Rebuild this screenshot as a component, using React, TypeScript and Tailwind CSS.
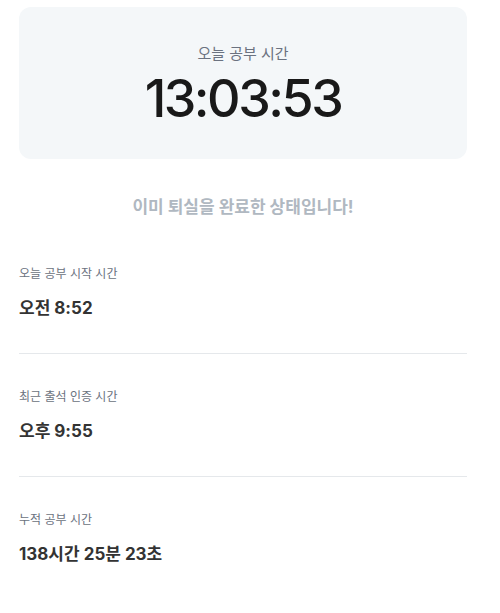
type Row = { label: string; value: string };

const rows: Row[] = [
  { label: "오늘 공부 시작 시간", value: "오전 8:52" },
  { label: "최근 출석 인증 시간", value: "오후 9:55" },
  { label: "누적 공부 시간", value: "138시간 25분 23초" },
];

export default function App() {
  return (
    <div className="min-h-screen bg-white font-['Inter','Noto_Sans_CJK_KR',sans-serif]">
      <div className="ml-[19px] w-[448px] pt-[7px]">
        <div className="flex h-[152px] flex-col items-center rounded-xl bg-[#f4f7f9] pt-[36px]">
          <p className="text-[15px] leading-[22px] text-[#6b7280]">오늘 공부 시간</p>
          <p className="mt-[6px] text-[52px] leading-[56px] font-medium tracking-[-2.5px] text-[#191919]">
            13:03:53
          </p>
        </div>

        <p className="mt-[36px] text-center text-[17px] leading-[24px] font-bold text-[#b0b8c1]">
          이미 퇴실을 완료한 상태입니다!
        </p>

        <div className="mt-[46px]">
          {rows.map((r, i) => (
            <div key={r.label}>
              {i > 0 && <div className="h-px bg-[#e5e8eb]" />}
              <div className={i > 0 ? "pt-[34px] pb-[34px]" : "pb-[34px]"}>
                <p className="text-[12px] leading-[18px] text-[#6b7280]">{r.label}</p>
                <p className="mt-[14px] text-[17px] leading-[22px] font-bold text-[#333333]">
                  {r.value}
                </p>
              </div>
            </div>
          ))}
        </div>
      </div>
    </div>
  );
}
